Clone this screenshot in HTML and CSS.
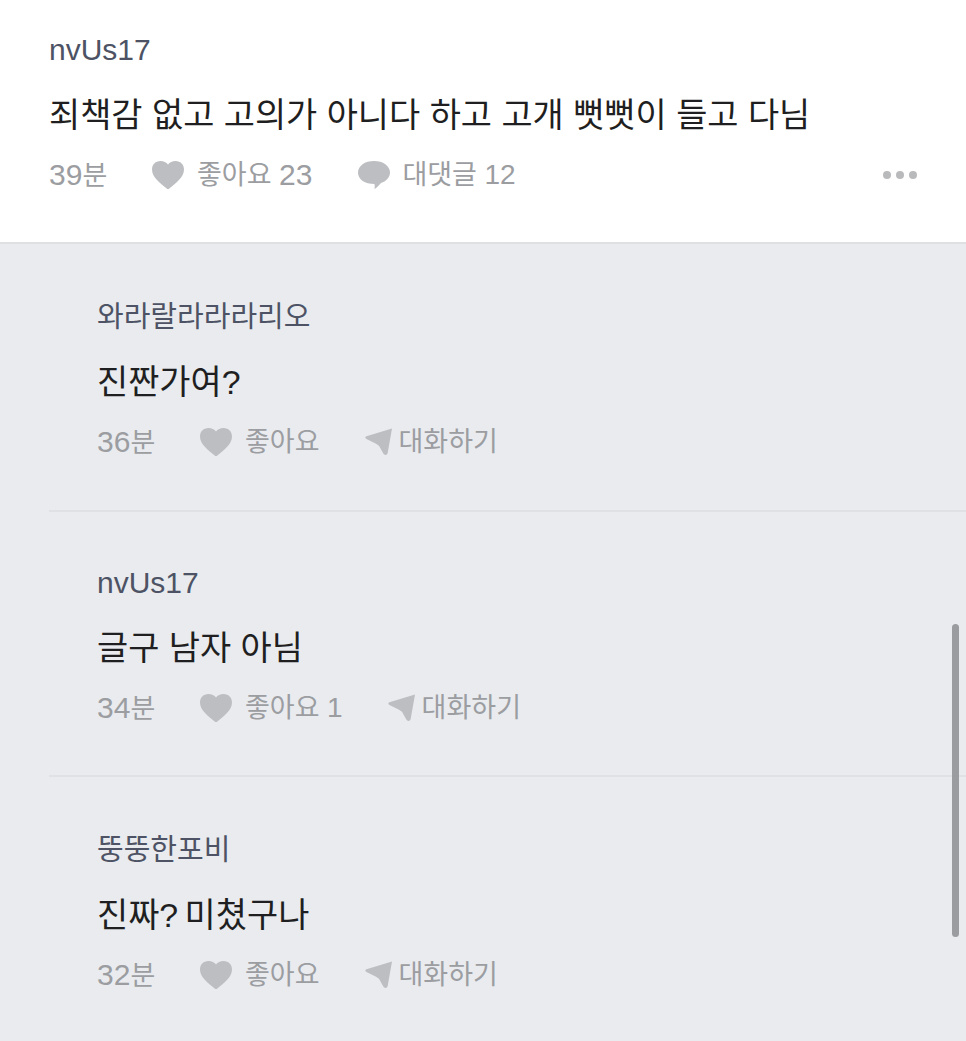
FILE: index.html
```html
<!DOCTYPE html>
<html lang="ko">
<head>
    <meta charset="UTF-8">
    <meta name="viewport" content="width=device-width, initial-scale=1.0">
    <title>댓글</title>
    <link rel="stylesheet" href="styles.css">
</head>
<body>
    <svg class="defs" width="0" height="0">
        <symbol id="heart" viewBox="0 0 32 28"><path d="M16 28C15 28 14.300 27.300 13.500 26.500 9 22.500 0 16.500 0 8.500 0 3.500 3.500 0 8.500 0 11.500 0 14.500 1.300 16 3.500 17.500 1.300 20.500 0 23.500 0 28.500 0 32 3.500 32 8.500 32 16.500 23 22.500 18.500 26.500 17.700 27.300 17 28 16 28Z"/></symbol>
        <symbol id="bubble" viewBox="0 0 32 28"><path d="M16 0C25 0 32 4.800 32 11.500 32 16.500 28 20.500 23 22 21 24.500 18.500 27 16.500 28 16.800 26 16.800 24.500 16.500 23 7 23 0 18.500 0 11.500 0 4.800 7 0 16 0Z"/></symbol>
        <symbol id="send" viewBox="0 0 28 28"><path d="M28 0 23.500 25.500C23 28 20 28 19 26L14.500 18 11 15.500 1.500 11C0 10 0 8.500 1.500 8Z"/></symbol>
    </svg>

    <section class="comment">
        <div class="name"><span class="num">nvUs17</span></div>
        <p class="text">죄책감 없고 고의가 아니다 하고 고개 뻣뻣이 들고 다님</p>
        <div class="meta">
            <span class="time"><span class="num">39</span>분</span>
            <span class="act"><svg class="ic ic-heart"><use href="#heart"/></svg>좋아요&nbsp;<span class="num">23</span></span>
            <span class="act"><svg class="ic ic-bubble"><use href="#bubble"/></svg>대댓글&nbsp;<span class="num small">12</span></span>
            <span class="more"><i></i><i></i><i></i></span>
        </div>
    </section>

    <section class="replies">
        <div class="reply">
            <div class="name">와라랄라라라리오</div>
            <p class="text">진짠가여?</p>
            <div class="meta">
                <span class="time"><span class="num">36</span>분</span>
                <span class="act"><svg class="ic ic-heart"><use href="#heart"/></svg>좋아요</span>
                <span class="act"><svg class="ic ic-send"><use href="#send"/></svg>대화하기</span>
            </div>
        </div>
        <div class="reply">
            <div class="name"><span class="num">nvUs17</span></div>
            <p class="text">글구 남자 아님</p>
            <div class="meta">
                <span class="time"><span class="num">34</span>분</span>
                <span class="act"><svg class="ic ic-heart"><use href="#heart"/></svg>좋아요&nbsp;<span class="num small">1</span></span>
                <span class="act"><svg class="ic ic-send"><use href="#send"/></svg>대화하기</span>
            </div>
        </div>
        <div class="reply">
            <div class="name">뚱뚱한포비</div>
            <p class="text narrow">진짜? 미쳤구나</p>
            <div class="meta">
                <span class="time"><span class="num">32</span>분</span>
                <span class="act"><svg class="ic ic-heart"><use href="#heart"/></svg>좋아요</span>
                <span class="act"><svg class="ic ic-send"><use href="#send"/></svg>대화하기</span>
            </div>
        </div>
    </section>

    <div class="scrollbar"></div>
</body>
</html>
```

FILE: styles.css
```css
*{padding: 0;margin: 0;box-sizing: border-box;}
html,body{height: 100%;overflow: hidden;}
body{position: relative;background: #e9ebef;font-family: "Liberation Sans","Noto Sans CJK KR",sans-serif;color: #1f1f21;}
.defs{position: absolute;}
.comment{height: 244px;padding: 32px 49px 0;background: #fff;border-bottom: 2px solid #dfe0e2;}
.reply{height: 266px;padding: 55px 0 0 97px;}
.reply + .reply{height: 265px;border-top: 2px solid #dfe1e5;margin-left: 49px;padding-left: 48px;padding-top: 53px;}
.reply:last-child{padding-top: 55px;}
.name{height: 36px;font-size: 29px;line-height: 36px;color: #4d5364;}
.name .num{font-size: 30px;}
.text{height: 36px;margin-top: 29px;font-size: 33.9px;line-height: 36px;white-space: nowrap;}
.narrow{word-spacing: -3px;}
.meta{display: flex;align-items: center;height: 36px;margin-top: 24px;font-size: 27px;line-height: 36px;color: #9b9da1;}
.meta .num{font-size: 30px;}
.meta .small{font-size: 28px;}
.time{width: 103px;}
.act{display: flex;align-items: center;margin-right: 45px;}
.ic{fill: #bcbec1;}
.ic-heart{width: 32px;height: 28px;margin-right: 13px;}
.ic-bubble{width: 32px;height: 28px;margin-left: 1px;margin-right: 12px;}
.ic-send{width: 27px;height: 28px;margin-right: 7px;}
.more{display: flex;gap: 5px;margin-left: auto;}
.more i{width: 8px;height: 8px;border-radius: 50%;background: #b9babc;}
.scrollbar{position: absolute;left: 952px;top: 624px;width: 7px;height: 313px;border-radius: 4px;background: #9a9ca0;}
```
